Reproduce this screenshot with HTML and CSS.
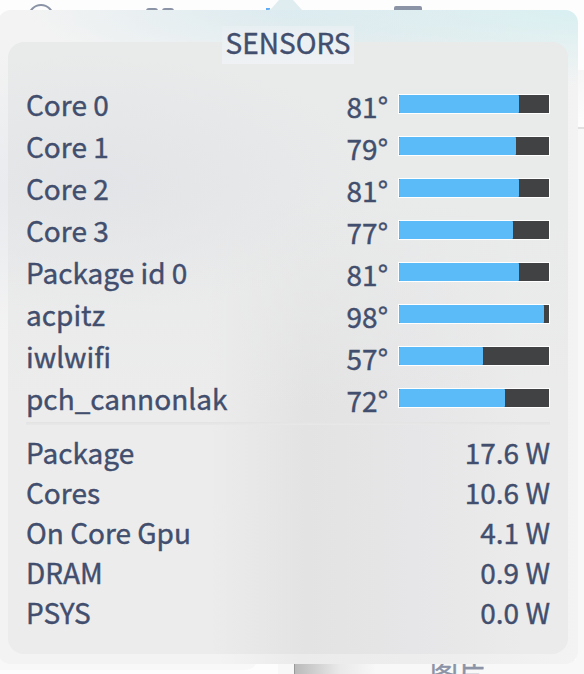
FILE: index.html
```html
<!DOCTYPE html>
<html lang="en">
<head>
<meta charset="utf-8">
<title>Sensors</title>
<link rel="stylesheet" href="styles.css">
</head>
<body>
<div class="desktop">
  <svg class="backdrop" width="584" height="674" viewBox="0 0 584 674" aria-hidden="true">
    <defs>
      <linearGradient id="shade"><stop offset="0" stop-color="#b9b9b9"/><stop offset=".55" stop-color="#e9e9e9"/><stop offset="1" stop-color="#f8f8f8"/></linearGradient>
      <linearGradient id="side" x2="0" y2="1"><stop offset="0" stop-color="#f6f6f6"/><stop offset="1" stop-color="#fdfdfd"/></linearGradient>
    </defs>
    <circle cx="41" cy="17" r="12" fill="none" stroke="#8b93a6" stroke-width="2"/>
    <path d="M146 11q0-3 3-3h6q3 0 3 3zM162 11q0-3 3-3h6q3 0 3 3zM394 11V8q0-2 2-2h24q2 0 2 2v3z" fill="#8b93a6"/>
    <path d="M266 8h4v3h-4z" fill="#5fabf5"/>
    <path d="M576 70h8v58h-8z" fill="url(#side)"/>
    <path d="M576 127h8v2h-8z" fill="#e1e1e1"/>
    <path d="M576 129h8v535h-8z" fill="#f8f8f8"/>
    <path d="M0 650h258v5q0 15-15 15H0z" fill="#f8f8f8"/>
    <path d="M278 660h306v14H278z" fill="#f8f8f8"/>
    <path d="M294 660h82v14h-82z" fill="url(#shade)"/>
    <path d="M294 660h1v14h-1z" fill="#999"/>
  </svg>
  <span class="folder">图片</span>
  <section class="popup">
    <svg class="arrow" width="40" height="10" viewBox="0 0 40 10" aria-hidden="true"><path d="M0 10Q2 10 4 8L11 0H25L34 10z" fill="#dfecf0"/></svg>
    <div class="card">
      <h1 class="title">SENSORS</h1>
      <div class="temps">
        <div class="row"><span class="name">Core 0</span><span class="temp">81°</span><span class="bar"><i class="fill" style="width:120px"></i></span></div>
        <div class="row"><span class="name">Core 1</span><span class="temp">79°</span><span class="bar"><i class="fill" style="width:117px"></i></span></div>
        <div class="row"><span class="name">Core 2</span><span class="temp">81°</span><span class="bar"><i class="fill" style="width:120px"></i></span></div>
        <div class="row"><span class="name">Core 3</span><span class="temp">77°</span><span class="bar"><i class="fill" style="width:114px"></i></span></div>
        <div class="row"><span class="name">Package id 0</span><span class="temp">81°</span><span class="bar"><i class="fill" style="width:120px"></i></span></div>
        <div class="row"><span class="name">acpitz</span><span class="temp">98°</span><span class="bar"><i class="fill" style="width:145px"></i></span></div>
        <div class="row"><span class="name">iwlwifi</span><span class="temp">57°</span><span class="bar"><i class="fill" style="width:84px"></i></span></div>
        <div class="row"><span class="name">pch_cannonlak</span><span class="temp">72°</span><span class="bar"><i class="fill" style="width:106px"></i></span></div>
      </div>
      <hr class="rule">
      <div class="power">
        <div class="row"><span>Package</span><span>17.6 W</span></div>
        <div class="row"><span>Cores</span><span>10.6 W</span></div>
        <div class="row"><span>On Core Gpu</span><span>4.1 W</span></div>
        <div class="row"><span>DRAM</span><span>0.9 W</span></div>
        <div class="row"><span>PSYS</span><span>0.0 W</span></div>
      </div>
    </div>
  </section>
</div>
</body>
</html>
```
FILE: styles.css
```css
* { box-sizing: border-box; }
body { margin: 0; }
.desktop {
  position: relative;
  width: 584px;
  height: 674px;
  padding-top: 10px;
  overflow: hidden;
  background: #fdfdfd;
  color: #424e6d;
  font: 28px/44px "Noto Sans CJK SC", sans-serif;
  -webkit-text-stroke: .4px;
}
.backdrop { position: absolute; left: 0; top: 0; }
.folder {
  position: absolute;
  left: 430px;
  top: 652px;
  font-size: 28px;
  line-height: 40px;
  color: #8b93a6;
}
.popup {
  position: relative;
  width: 580px;
  height: 654px;
  margin-left: -2px;
  padding: 32px 10px 10px;
  border-radius: 13px;
  background:
    radial-gradient(ellipse 330px 75px at 100% 0, #d8eff1, #d8eff100),
    radial-gradient(ellipse 260px 65px at 50% 0, #dcebf0, #dcebf000),
    radial-gradient(ellipse 280px 140px at 6% 28%, #e8eaee, #e8eaee00),
    linear-gradient(90deg, #f3f3f3 38%, #ebebeb 52%, #eeeeef 80%, #f3f3f3);
}
.arrow { position: absolute; left: 270px; top: -10px; }
.card {
  display: flow-root;
  height: 612px;
  padding: 0 18px;
  border-radius: 16px;
  background:
    radial-gradient(ellipse 290px 130px at 15% 23%, #e3e4e7, #e3e4e700),
    linear-gradient(#e9eaea 25%, #e9eaea00 60%),
    linear-gradient(90deg, #ececec 36%, #e3e3e3 53%, #e6e6e8 73%, #ebebeb 92%);
}
.title {
  width: 132px;
  height: 38px;
  margin: -16px auto 0;
  background: linear-gradient(#e8eff2, #eff1f4);
  font-size: inherit;
  font-weight: 400;
  line-height: 33px;
  text-align: center;
}
.temps { padding-top: 18px; }
.row { display: flex; height: 42px; }
.name { width: 201px; white-space: nowrap; }
.temp { margin: 2px 10px 0 auto; }
.bar {
  width: 152px;
  height: 20px;
  margin: 12px 0 0;
  border: 1px solid #fff;
  background: #414244;
}
.fill { display: block; height: 100%; background: #5abbf8; border-radius: 1px; }
.rule {
  height: 3px;
  margin: 4px 0 6px;
  border: 0;
  background: linear-gradient(#e3e3e3, #e8e8e8);
}
.power .row { height: 40px; line-height: 42px; justify-content: space-between; }
```
